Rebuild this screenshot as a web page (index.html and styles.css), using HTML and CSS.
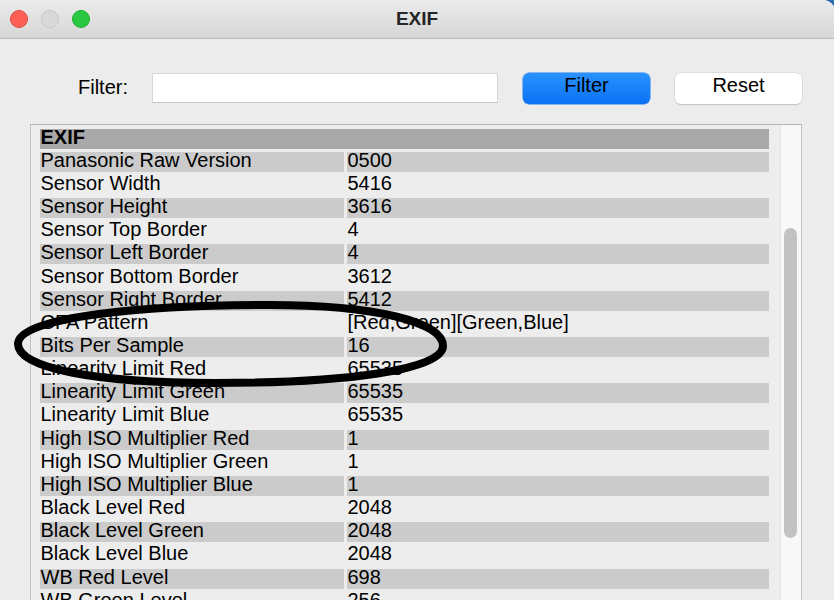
FILE: index.html
```html
<!DOCTYPE html>
<html lang="en">
<head>
  <meta charset="UTF-8" />
  <title>EXIF</title>
  <link rel="stylesheet" href="styles.css">
</head>
<body>

  <div class="window">
    <!-- Title bar -->
    <div class="titlebar">
      <div class="lights">
        <span class="light red"></span>
        <span class="light grey"></span>
        <span class="light green"></span>
      </div>
      <div class="title">EXIF</div>
    </div>

    <div class="content">
      <!-- Filter row -->
      <div class="filterRow">
        <label class="filterLabel">Filter:</label>
        <input type="text" class="filterInput" />
        <button class="btn btnPrimary">Filter</button>
        <button class="btn">Reset</button>
      </div>

      <!-- Tag list -->
      <div class="listBox">
        <div class="rows">
          <div class="row head"><div class="cell span">EXIF</div></div>
          <div class="row shaded"><div class="cell">Panasonic Raw Version</div><div class="cell">0500</div></div>
          <div class="row"><div class="cell">Sensor Width</div><div class="cell">5416</div></div>
          <div class="row shaded"><div class="cell">Sensor Height</div><div class="cell">3616</div></div>
          <div class="row"><div class="cell">Sensor Top Border</div><div class="cell">4</div></div>
          <div class="row shaded"><div class="cell">Sensor Left Border</div><div class="cell">4</div></div>
          <div class="row"><div class="cell">Sensor Bottom Border</div><div class="cell">3612</div></div>
          <div class="row shaded"><div class="cell">Sensor Right Border</div><div class="cell">5412</div></div>
          <div class="row"><div class="cell">CFA Pattern</div><div class="cell">[Red,Green][Green,Blue]</div></div>
          <div class="row shaded"><div class="cell">Bits Per Sample</div><div class="cell">16</div></div>
          <div class="row"><div class="cell">Linearity Limit Red</div><div class="cell">65535</div></div>
          <div class="row shaded"><div class="cell">Linearity Limit Green</div><div class="cell">65535</div></div>
          <div class="row"><div class="cell">Linearity Limit Blue</div><div class="cell">65535</div></div>
          <div class="row shaded"><div class="cell">High ISO Multiplier Red</div><div class="cell">1</div></div>
          <div class="row"><div class="cell">High ISO Multiplier Green</div><div class="cell">1</div></div>
          <div class="row shaded"><div class="cell">High ISO Multiplier Blue</div><div class="cell">1</div></div>
          <div class="row"><div class="cell">Black Level Red</div><div class="cell">2048</div></div>
          <div class="row shaded"><div class="cell">Black Level Green</div><div class="cell">2048</div></div>
          <div class="row"><div class="cell">Black Level Blue</div><div class="cell">2048</div></div>
          <div class="row shaded"><div class="cell">WB Red Level</div><div class="cell">698</div></div>
          <div class="row"><div class="cell">WB Green Level</div><div class="cell">256</div></div>
        </div>
        <div class="scrollTrack"><div class="scrollThumb"></div></div>
      </div>
    </div>
  </div>

  <!-- hand-drawn marker oval -->
  <svg class="oval" width="834" height="600" viewBox="0 0 834 600">
    <path d="M 18,344 C 18,316 150,305 270,305 C 375,305 443,322 443,346 C 443,370 345,383 215,383 C 95,383 18,368 18,344 Z"
          fill="none" stroke="#000" stroke-width="8" />
  </svg>

</body>
</html>
```

FILE: styles.css
```css
html, body { margin: 0; padding: 0; overflow: hidden; }
body { background: #2b6cb3; font-family: "Liberation Sans", Arial, sans-serif; color: #000; height: 600px; }

.window { margin-left: -9px; width: 844px; height: 620px; background: #ececec; border-radius: 12px 12px 0 0; overflow: hidden; }

.titlebar { height: 38px; border-bottom: 1px solid #bdbdbd; background: linear-gradient(#ebebeb, #d6d6d6); display: flex; align-items: center; position: relative; }
.lights { display: flex; gap: 13px; padding-left: 19px; }
.light { width: 18px; height: 18px; border-radius: 50%; box-sizing: border-box; }
.red { background: #fe5f57; border: 1px solid #e2463f; }
.grey { background: #d9d9d9; border: 1px solid #c6c6c6; }
.green { background: #28c940; border: 1px solid #1eab2f; }
.title { position: absolute; left: 0; right: 0; top: 0; line-height: 37px; text-align: center; font-weight: bold; font-size: 19px; color: #262626; padding-left: 8px; }

.content { padding: 34px 0 0 39px; }

.filterRow { display: flex; align-items: center; padding-left: 48px; height: 30px; }
.filterLabel { font-size: 20px; margin-right: 24px; padding-bottom: 1px; }
.filterInput { width: 346px; height: 30px; box-sizing: border-box; border: 1px solid #d6d6d6; border-bottom-color: #c4c4c4; background: #fff; margin: 0 25px 0 0; }
.btn { width: 127px; height: 31px; border-radius: 6px; border: none; background: #fff; font-family: "Liberation Sans", Arial, sans-serif; font-size: 20px; color: #000; margin-right: 25px; padding: 0 0 6px 0; box-shadow: 0 0 0 0.5px #cfcfcf, 0 1px 1px #bdbdbd; }
.btnPrimary { background: linear-gradient(#2a92ff, #0a72f4); box-shadow: 0 0 0 0.5px #1e7ff0; }

.listBox { margin-top: 21px; width: 772px; height: 520px; box-sizing: border-box; border-top: 1px solid #b5b5b5; border-left: 1px solid #c2c2c2; border-right: 1px solid #c2c2c2; background: #ededed; display: flex; }
.rows { padding: 2px 0 0 9px; width: 729px; }
.row { display: grid; grid-template-columns: 304px 422px; column-gap: 3px; padding: 1.58px 0; }
.cell { height: 20px; line-height: 17px; font-size: 20px; white-space: nowrap; padding-left: 0.5px; }
.row.shaded .cell { background: #cbcbcb; }
.row.head .cell { background: #a9a9a9; font-weight: bold; }
.span { grid-column: 1 / 3; }

.scrollTrack { margin-left: 11px; width: 21px; box-sizing: border-box; border-left: 1px solid #e2e2e2; background: #f8f8f8; padding: 103px 0 0 3px; }
.scrollThumb { width: 13px; height: 310px; border-radius: 7px; background: #c2c2c2; }

.oval { position: absolute; left: 0; top: 0; pointer-events: none; }
```
